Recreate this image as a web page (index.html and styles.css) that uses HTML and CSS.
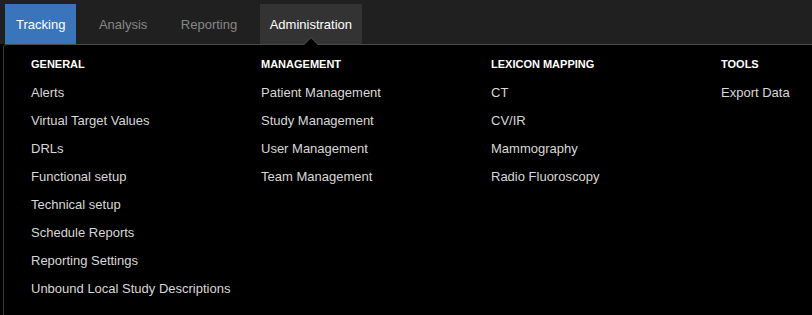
FILE: index.html
```html
<!DOCTYPE html>
<html lang="en">
<head>
  <meta charset="UTF-8" />
  <title>Administration</title>
  <link rel="stylesheet" href="styles.css">
</head>
<body>

<nav class="topbar">
  <a class="tab active">Tracking</a>
  <a class="tab">Analysis</a>
  <a class="tab">Reporting</a>
  <a class="tab open">Administration</a>
</nav>

<div class="dropdown">
  <div class="col">
    <h4>GENERAL</h4>
    <a>Alerts</a>
    <a>Virtual Target Values</a>
    <a>DRLs</a>
    <a>Functional setup</a>
    <a>Technical setup</a>
    <a>Schedule Reports</a>
    <a>Reporting Settings</a>
    <a>Unbound Local Study Descriptions</a>
  </div>
  <div class="col">
    <h4>MANAGEMENT</h4>
    <a>Patient Management</a>
    <a>Study Management</a>
    <a>User Management</a>
    <a>Team Management</a>
  </div>
  <div class="col">
    <h4>LEXICON MAPPING</h4>
    <a>CT</a>
    <a>CV/IR</a>
    <a>Mammography</a>
    <a>Radio Fluoroscopy</a>
  </div>
  <div class="col">
    <h4>TOOLS</h4>
    <a>Export Data</a>
  </div>
</div>

</body>
</html>
```
FILE: styles.css
```css
* { box-sizing: border-box; }
html, body { height: 100%; }
body {
  margin: 0;
  background: #000;
  font-family: 'Liberation Sans', Arial, sans-serif;
  font-size: 13px;
  color: #d8d8d8;
  overflow: hidden;
}
.topbar {
  background: #202020;
  height: 44px;
  padding: 4px 0 0 5px;
  display: flex;
  gap: 11.5px;
}
.tab {
  height: 40px;
  line-height: 40px;
  padding: 1px 11px 0;
  color: #878787;
  cursor: pointer;
  white-space: nowrap;
}
.tab.active { background: #3a75bb; color: #fff; }
.tab.open {
  background: #333;
  color: #fff;
  position: relative;
  padding: 1px 10px 0;
}
/* little arrow pointing at the open tab */
.tab.open::before,
.tab.open::after {
  content: "";
  position: absolute;
  left: 50%;
  bottom: -1px;
  margin-left: -8px;
  border: 8px solid transparent;
  border-top: 0;
  border-bottom-color: #555;
}
.tab.open::after {
  bottom: -2px;
  border-bottom-color: #000;
}
.dropdown {
  margin-left: 3px;
  height: calc(100% - 44px);
  border-top: 1px solid #4a4a4a;
  border-left: 1px solid #3a3a3a;
  border-top-left-radius: 4px;
  background: #000;
  padding: 12px 0 0 27px;
  display: flex;
}
.col {
  flex: none;
  width: 230px;
  display: flex;
  flex-direction: column;
}
.col:last-child { width: auto; }
.col h4 {
  margin: 0 0 8px;
  font-size: 11px;
  line-height: 14px;
  font-weight: bold;
  color: #fff;
}
.col a {
  line-height: 28px;
  white-space: nowrap;
  cursor: pointer;
}
```
